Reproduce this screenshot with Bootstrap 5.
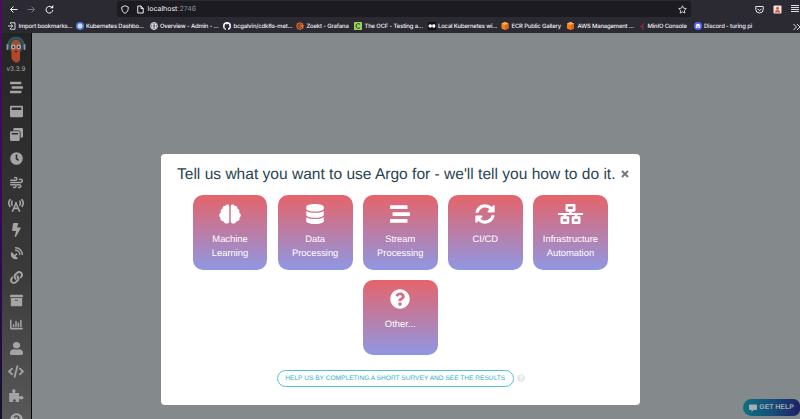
<!DOCTYPE html>
<html lang="en">
<head>
<meta charset="utf-8">
<meta name="viewport" content="width=device-width, initial-scale=1">
<title>Argo</title>
<link rel="stylesheet" href="https://cdn.jsdelivr.net/npm/bootstrap@5.3.0/dist/css/bootstrap.min.css">
<style>
html, body { height: 419px; overflow: hidden; }
body { font-family: "Liberation Sans", Arial, sans-serif; background: linear-gradient(#4c0d62, #37085a 50%, #14102c); padding-left: 1.5px; text-rendering: geometricPrecision; }
svg { display: block; flex: none; }
.chrome { background: #2b2a33; font-family: Inter, "Noto Sans", sans-serif; color: #f4f4f8; }
.toolbar { height: 18px; padding-left: 7px; }
.tools { width: 108px; gap: 9px; }
.address { width: 574px; height: 16px; background: #1c1b22; border-radius: 2px; font-size: 7px; padding: 0 4px; gap: 4px; }
.address span { padding-top: 1px; }
.address .port { color: #8e8d96; }
.toolbar-end { gap: 9px; margin-left: 64px; }
.bookmarks { display: grid; grid-template-columns: 67.5px 74px 73.5px 73px 58px 73.5px 73.5px 65px 74px 53.5px 99px auto; height: 15px; padding: 2px 0 0 6.5px; font-size: 5.9px; letter-spacing: -.15px; font-weight: 500; white-space: nowrap; align-items: center; }
.bookmarks .bm { display: flex; align-items: center; gap: 2.5px; }
.bookmarks .bm span { padding-top: 1px; }
.rail { width: 30px; background: linear-gradient(#242424, #303030 35%, #3a3a3a 62%, #585858); border-right: 1.5px solid #080808; color: #a4a4a4; padding-top: 4px; }
.rail .ver { font-size: 6.9px; line-height: 8px; color: #a9a9a9; margin-top: 2.500px; }
.rail .slot { height: 23.73px; flex: none; display: flex; align-items: center; justify-content: center; }
.rail .slots { margin-top: 2px; }
.stage { background: #84898b; padding: 121px 0 0 129.5px; }
.dialog { width: 478.5px; height: 251px; border-radius: 4px; background: #fff; padding-top: 10px; }
.dialog h1 { font-size: 15.55px; line-height: 21px; color: #2a4452; margin: 0; white-space: nowrap; font-weight: 400; }
.heading { padding: 0 10.500px 0 16px; height: 20px; }
.tiles { gap: 10.3px; margin-top: 11px; }
.tile { width: 74.8px; height: 74.8px; border-radius: 10px; background: linear-gradient(#e5646a, #8f97e3); color: #fff; font-size: 9.4px; line-height: 14px; padding-top: 9px; }
.tile svg { margin-bottom: 8px; }
.survey { height: 17px; width: 237px; border: 1px solid #52c0d0; border-radius: 9px; color: #2fb1c4; font-size: 6.6px; line-height: 15px; white-space: nowrap; }
.survey-row { margin-top: 15px; gap: 3px; padding-left: 1px; color: #e3e5e7; }
.help { right: 0; top: 399px; width: 57px; height: 17px; border-radius: 9px 7px 7px 9px; background: linear-gradient(90deg, #0b7181, #164f7a 50%, #1b2166); color: #a9abb0; font-size: 6.9px; font-weight: 700; gap: 2px; white-space: nowrap; }
.help span { padding-top: 1.500px; }
</style>
<script src="https://cdn.jsdelivr.net/npm/bootstrap@5.3.0/dist/js/bootstrap.bundle.min.js"></script>
</head>
<body class="d-flex flex-column m-0">
<header class="chrome flex-shrink-0">
  <div class="toolbar d-flex align-items-center">
    <div class="tools d-flex align-items-center">
      <svg width="9" height="9" viewBox="0 0 18 18" fill="none" stroke="#f4f4f8" stroke-width="2"><path d="M17 9H3M9 3 3 9l6 6"/></svg>
      <svg width="9" height="9" viewBox="0 0 18 18" fill="none" stroke="#77767f" stroke-width="2"><path d="M1 9h14M9 3l6 6-6 6"/></svg>
      <svg width="9" height="9" viewBox="0 0 18 18" fill="none" stroke="#f4f4f8" stroke-width="2"><path d="M15.500 10A6.700 6.700 0 1 1 13 4.200"/><path d="M10 6.500h6.500V0z" fill="#f4f4f8" stroke="none"/></svg>
    </div>
    <div class="address d-flex align-items-center">
      <svg width="8" height="9" viewBox="0 0 16 18" fill="none" stroke="#f4f4f8" stroke-width="1.800"><path d="M8 1.500 14.500 4c.3 6-1.500 10.500-6.500 12.800C3 14.500 1.200 10 1.500 4z"/></svg>
      <svg class="ms-1" width="7" height="9" viewBox="0 0 14 18" fill="none" stroke="#f4f4f8" stroke-width="1.900"><path d="M1.500 2v14h11V7L8 2zM8 2v5h4.500"/></svg>
      <span>localhost<span class="port">:2746</span></span>
      <svg class="ms-auto" width="9" height="9" viewBox="0 0 18 18" fill="none" stroke="#e8e8ee" stroke-width="1.700" stroke-linejoin="round"><path d="m9 1.500 2.300 4.900 5.300.7-3.900 3.700 1 5.400L9 13.600l-4.700 2.600 1-5.400L1.400 7.100l5.300-.7z"/></svg>
    </div>
    <div class="toolbar-end d-flex align-items-center">
      <svg width="9" height="9" viewBox="0 0 18 18" fill="none" stroke="#eeeef3" stroke-width="1.900" stroke-linejoin="round"><path d="M1.500 3h15v5.500a7.500 7.500 0 0 1-15 0zM5 7.500l4 4 4-4"/></svg>
      <svg width="9" height="9" viewBox="0 0 18 18"><rect x="1" y="1" width="16" height="16" rx="2" fill="#f3e3e0"/><circle cx="9" cy="6.500" r="3" fill="#d9573f"/><path d="M3.500 15c0-7 11-7 11 0z" fill="#d9573f"/></svg>
      <svg width="8" height="8" viewBox="0 0 8 8" fill="#dedee4" shape-rendering="crispEdges"><path d="M0 0h8v1H0zM0 2h8v1H0zM0 4h8v1H0zM0 6h8v1H0z"/></svg>
    </div>
  </div>
  <nav class="bookmarks">
    <div class="bm"><svg width="8" height="8" viewBox="0 0 16 16" fill="none" stroke="#f4f4f8" stroke-width="1.700"><path d="M5 4V1.500h9v13H5V12M0 8h9M6 5l3.500 3L6 11"/></svg><span>Import bookmarks...</span></div>
    <div class="bm"><svg width="8" height="8" viewBox="0 0 16 16"><circle cx="8" cy="8" r="8" fill="#4a80e8"/><circle cx="8" cy="8" r="3.500" fill="none" stroke="#fff" stroke-width="1.500"/><path d="M8 2v12M2 8h12M4 4l8 8M12 4l-8 8" stroke="#fff"/></svg><span>Kubernetes Dashbo...</span></div>
    <div class="bm"><svg width="8" height="8" viewBox="0 0 16 16" fill="none" stroke="#f4f4f8" stroke-width="1.500"><circle cx="8" cy="8" r="7"/><ellipse cx="8" cy="8" rx="3.300" ry="7"/><path d="M1 8h14M2 4.500h12M2 11.500h12"/></svg><span>Overview - Admin - ...</span></div>
    <div class="bm"><svg width="8" height="8" viewBox="0 0 16 16"><circle cx="8" cy="8" r="8" fill="#f4f4f8"/><path d="M6 16v-3.500C2 12 3 7 4 6V3.500l2 1h4l2-1V6c1.500 2 1.500 6-2 6.500V16zM6 14c-2 .5-3-1-3.500-2" fill="#2b2a33"/></svg><span>bcgalvin/cdk8s-met...</span></div>
    <div class="bm"><svg width="8" height="8" viewBox="0 0 16 16"><path d="m8 0 2 2 3-.5.500 3L16 7l-1.500 3 .5 3-3 .5L9 16l-3-1.500-3 .5-.5-3L0 9l1.500-3L1 3l3-.5z" fill="#ee6c27"/><path d="M12 10a4.500 4.500 0 1 1-.5-4.500M9.500 9a2 2 0 1 1-.5-2.500" fill="none" stroke="#2b2a33" stroke-width="1.500"/></svg><span>Zoekt - Grafana</span></div>
    <div class="bm"><svg width="8" height="8" viewBox="0 0 16 16"><rect width="16" height="16" rx="1" fill="#9bd05a"/><path d="M12 4.500C9 2 4 3.500 4 8s5 6 8 3.500" fill="none" stroke="#29371c" stroke-width="1.900"/></svg><span>The OCF - Testing a...</span></div>
    <div class="bm"><svg width="8" height="8" viewBox="0 0 16 16"><rect width="16" height="16" fill="#111"/><circle cx="4.500" cy="8" r="3.500" fill="#fff"/><rect x="8.500" y="4.500" width="6" height="7" rx="2.500" fill="#fff"/></svg><span>Local Kubernetes wi...</span></div>
    <div class="bm"><svg width="8" height="8" viewBox="0 0 16 16"><path d="m8 0 7 3v10l-7 3-7-3V3z" fill="#f58220"/><path d="m8 6 7-3v10l-7 3z" fill="#dc6516"/><path d="m1 3 7-3 7 3-7 3z" fill="#ffae53"/></svg><span>ECR Public Gallery</span></div>
    <div class="bm"><svg width="9" height="8" viewBox="0 0 16 16"><path d="m8 0 7 3v10l-7 3-7-3V3z" fill="#f58220"/><path d="m8 6 7-3v10l-7 3z" fill="#dc6516"/><path d="m1 3 7-3 7 3-7 3z" fill="#ffae53"/></svg><span>AWS Management ...</span></div>
    <div class="bm"><svg width="5" height="8" viewBox="0 0 10 16" fill="none" stroke="#b52b3f" stroke-width="1.700"><path d="M6 16V8l-5 2c1-3 4-4 6-5 2-1 1-3-1-4"/></svg><span>MinIO Console</span></div>
    <div class="bm"><svg width="8" height="8" viewBox="0 0 16 16"><circle cx="8" cy="8" r="8" fill="#5468f0"/><path d="M3.500 11c0-3 .5-5 1.500-6.500 2-.7 4-.7 6 0 1 1.500 1.500 3.500 1.500 6.500-1 .8-2 1-2.500 1l-.5-1h-3L6 12c-.5 0-1.500-.2-2.500-1z" fill="#fff"/><circle cx="6.200" cy="8.300" r="1.100" fill="#5468f0"/><circle cx="9.800" cy="8.300" r="1.100" fill="#5468f0"/></svg><span>Discord - turing pi</span></div>
    <svg width="8" height="8" viewBox="0 0 16 16" fill="none" stroke="#f4f4f8" stroke-width="1.800"><path d="m1 2 6 6-6 6M8 2l6 6-6 6"/></svg>
  </nav>
</header>
<main class="d-flex flex-grow-1 overflow-hidden position-relative">
  <aside class="rail flex-shrink-0 d-flex flex-column">
    <div class="d-flex flex-column align-items-center flex-shrink-0">
      <svg width="20" height="26" viewBox="0 0 40 52"><path d="M4 17a16 16 0 0 1 32 0" fill="#234e55" stroke="#2b6268" stroke-width="3"/><circle cx="20" cy="18" r="15" fill="#234e55"/><path d="M20 6c7 0 10 5 10 12 0 6-2 9-2 15v14c-1 2-3 2-3-1v4c-2 2-4 1-4-1v2c-1 1-3 1-3-1v-3c-1 3-3 3-4 1v-3c-2 1-3 0-3-2V33c0-6-1-9-1-15C10 11 13 6 20 6z" fill="#b0492c"/><rect x="1" y="14" width="4" height="12" rx="2" fill="#8f9697"/><rect x="35" y="14" width="4" height="12" rx="2" fill="#8f9697"/><circle cx="14.500" cy="20" r="4.800" fill="#a9aaaa"/><circle cx="25.500" cy="20" r="4.800" fill="#a9aaaa"/><circle cx="14.800" cy="20" r="2" fill="#222"/><circle cx="25.200" cy="20" r="2" fill="#222"/><path d="M17 28q3 5 6 0z" fill="#2a1a16"/></svg>
      <div class="ver">v3.3.9</div>
    </div>
    <div class="slots">
      <div class="slot"><svg width="13" height="13" viewBox="0 0 512 512" fill="currentColor"><path d="M16 128h416c8.840 0 16-7.160 16-16V48c0-8.840-7.160-16-16-16H16C7.160 32 0 39.160 0 48v64c0 8.840 7.160 16 16 16zm480 80H80c-8.840 0-16 7.160-16 16v64c0 8.840 7.160 16 16 16h416c8.840 0 16-7.160 16-16v-64c0-8.840-7.160-16-16-16zm-64 176H16c-8.840 0-16 7.160-16 16v64c0 8.840 7.160 16 16 16h416c8.840 0 16-7.160 16-16v-64c0-8.840-7.160-16-16-16z"/></svg></div>
      <div class="slot"><svg width="13" height="13" viewBox="0 0 512 512" fill="currentColor"><path d="M464 32H48C21.500 32 0 53.500 0 80v352c0 26.500 21.500 48 48 48h416c26.500 0 48-21.500 48-48V80c0-26.500-21.500-48-48-48zm-16 160H64v-84c0-6.600 5.400-12 12-12h360c6.600 0 12 5.400 12 12v84z"/></svg></div>
      <div class="slot"><svg width="13" height="13" viewBox="0 0 512 512" fill="currentColor"><path d="M512 48v288c0 26.500-21.500 48-48 48h-48V176c0-44.100-35.900-80-80-80H128V48c0-26.500 21.500-48 48-48h288c26.500 0 48 21.500 48 48zM384 176v288c0 26.500-21.500 48-48 48H48c-26.500 0-48-21.500-48-48V176c0-26.500 21.500-48 48-48h288c26.500 0 48 21.500 48 48zm-68 28c0-6.600-5.400-12-12-12H76c-6.600 0-12 5.400-12 12v52h252v-52z"/></svg></div>
      <div class="slot"><svg width="13" height="13" viewBox="0 0 512 512" fill="currentColor"><path fill-rule="evenodd" d="M256 8a248 248 0 1 0 0 496 248 248 0 0 0 0-496zM224 96h64v160l70 52-39 50-95-72z"/></svg></div>
      <div class="slot"><svg width="13" height="13" viewBox="0 0 512 512" fill="none" stroke="currentColor" stroke-width="56" stroke-linecap="round"><path d="M30 166h190a55 55 0 1 0-38-95M30 256h392a65 65 0 1 0-44-114M30 346h150a55 55 0 1 1-38 95M270 346h100a55 55 0 1 1-38 95"/></svg></div>
      <div class="slot"><svg width="16" height="13" viewBox="0 0 640 512" fill="none" stroke="currentColor" stroke-width="64" stroke-linecap="round"><path d="M80 25c-65 90-65 180 0 270M165 80c-28 55-28 105 0 160M560 25c65 90 65 180 0 270M475 80c28 55 28 105 0 160M320 165 180 485M320 165l140 320M238 370h164"/><circle cx="320" cy="155" r="42" fill="currentColor" stroke="none"/></svg></div>
      <div class="slot"><svg width="9" height="14" viewBox="0 0 320 512" fill="currentColor"><path d="M296 160H180.600l42.600-129.800C227.200 15 215.700 0 200 0H56C44 0 33.800 8.900 32.200 20.800l-32 240C-1.700 275.200 9.500 288 24 288h118.700L96.600 482.500c-3.600 15.200 8 29.500 23.300 29.500 8.400 0 16.400-4.400 20.800-12l176-304c9.300-15.900-2.200-36-20.700-36z"/></svg></div>
      <div class="slot"><svg width="13" height="13" viewBox="0 0 512 512" fill="currentColor"><path d="M50 208c8-9 18-8 25-1l112 112 29-29a38 38 0 1 1 34 34l-29 29 87 87c9 9 9 18-3 25C130 545-20 365 50 208z"/><path d="M220 30c145 0 262 117 262 262M220 128c90 0 164 74 164 164" fill="none" stroke="currentColor" stroke-width="56" stroke-linecap="round"/></svg></div>
      <div class="slot"><svg width="13" height="13" viewBox="0 0 512 512" fill="currentColor"><path d="M326.612 185.391c59.747 59.809 58.927 155.698.36 214.590-.11.120-.24.250-.36.370l-67.200 67.200c-59.270 59.270-155.699 59.262-214.960 0-59.270-59.260-59.270-155.700 0-214.960l37.106-37.106c9.840-9.840 26.786-3.300 27.294 10.606.648 17.722 3.826 35.527 9.690 52.721 1.986 5.822.567 12.262-3.783 16.612l-13.087 13.087c-28.026 28.026-28.905 73.660-1.155 101.960 28.024 28.579 74.086 28.749 102.325.510l67.200-67.190c28.191-28.191 28.073-73.757 0-101.830-3.701-3.694-7.429-6.564-10.341-8.569a16.037 16.037 0 0 1-6.947-12.606c-.396-10.567 3.348-21.456 11.698-29.806l21.054-21.055c5.521-5.521 14.182-6.199 20.584-1.731a152.482 152.482 0 0 1 20.522 17.197zM467.547 44.449c-59.261-59.262-155.690-59.270-214.960 0l-67.200 67.200c-.12.120-.25.250-.36.370-58.566 58.892-59.387 154.781.36 214.590a152.454 152.454 0 0 0 20.521 17.196c6.402 4.468 15.064 3.789 20.584-1.731l21.054-21.055c8.350-8.350 12.094-19.239 11.698-29.806a16.037 16.037 0 0 0-6.947-12.606c-2.912-2.005-6.640-4.875-10.341-8.569-28.073-28.073-28.191-73.639 0-101.830l67.200-67.190c28.239-28.239 74.300-28.069 102.325.510 27.750 28.300 26.872 73.934-1.155 101.960l-13.087 13.087c-4.350 4.350-5.769 10.790-3.783 16.612 5.864 17.194 9.042 34.999 9.690 52.721.509 13.906 17.454 20.446 27.294 10.606l37.106-37.106c59.271-59.259 59.271-155.699.001-214.959z"/></svg></div>
      <div class="slot"><svg width="13" height="13" viewBox="0 0 512 512" fill="currentColor"><path d="M32 448c0 17.700 14.300 32 32 32h384c17.700 0 32-14.300 32-32V160H32v288zm160-212c0-6.600 5.400-12 12-12h104c6.600 0 12 5.400 12 12v8c0 6.600-5.400 12-12 12H204c-6.600 0-12-5.400-12-12v-8zM480 32H32C14.300 32 0 46.300 0 64v48c0 8.800 7.200 16 16 16h480c8.800 0 16-7.200 16-16V64c0-17.700-14.300-32-32-32z"/></svg></div>
      <div class="slot"><svg width="13" height="13" viewBox="0 0 512 512" fill="none" stroke="currentColor" stroke-width="60" stroke-linecap="round"><path d="M32 90v328h448" stroke-linejoin="round"/><path d="M140 270v65M236 140v195M332 205v130M428 100v235"/></svg></div>
      <div class="slot"><svg width="13" height="13" viewBox="0 0 448 512" preserveAspectRatio="none" fill="currentColor"><path d="M224 256c70.700 0 128-57.300 128-128S294.700 0 224 0 96 57.300 96 128s57.300 128 128 128zm89.600 32h-16.700c-22.200 10.200-46.900 16-72.900 16s-50.600-5.800-72.900-16h-16.700C60.200 288 0 348.200 0 422.400V464c0 26.500 21.500 48 48 48h352c26.500 0 48-21.500 48-48v-41.600c0-74.200-60.200-134.400-134.400-134.400z"/></svg></div>
      <div class="slot"><svg width="16" height="13" viewBox="0 0 640 512" fill="none" stroke="currentColor" stroke-width="72" stroke-linecap="round"><path d="M165 140 40 256l125 116M475 140l125 116-125 116M375 40 265 472"/></svg></div>
      <div class="slot"><svg width="15" height="13" viewBox="0 0 576 512" fill="currentColor"><path d="M0 160h125c20 0 24-14 10-32-38-46-10-118 50-118s88 72 50 118c-14 18-10 32 10 32h145v125c0 20 14 24 32 10 46-38 144-10 144 50s-98 88-144 50c-18-14-32-10-32 10v107H265c-20 0-24-14-12-30 30-35 8-78-48-78s-78 43-48 78c12 16 8 30-12 30H0z"/></svg></div>
      <div class="slot"><svg width="13" height="13" viewBox="0 0 512 512" fill="currentColor"><use href="#question"/></svg></div>
    </div>
  </aside>
  <section class="stage flex-grow-1">
    <div class="dialog">
      <div class="heading d-flex align-items-center justify-content-between">
        <h1>Tell us what you want to use Argo for - we'll tell you how to do it.</h1>
        <svg width="8" height="8" viewBox="0 0 16 16" stroke="#727679" stroke-width="3.800"><path d="m2 2 12 12M14 2 2 14"/></svg>
      </div>
      <div class="tiles d-flex flex-wrap justify-content-center">
        <div class="tile d-flex flex-column align-items-center text-center"><svg width="22" height="20" viewBox="0 0 44 40" fill="#fff"><path d="M20.500 4.500C20.500 0 14.500-.5 13 3.500 9 3 6.500 6 7.200 9.500 3.500 10.500 2.500 14 4 17-.5 19.500-.5 25 3 27.500 2 32 5.500 35 9 34.500c1.500 6 11.500 6.500 11.500 0zM23.500 4.500C23.500 0 29.500-.5 31 3.500c4-.5 6.500 2.500 5.800 6 3.700 1 4.700 4.500 3.200 7.500 4.500 2.500 4.500 8 1 10.500 1 4.500-2.500 7.500-6 7-1.500 6-11.500 6.500-11.500 0z"/></svg><span>Machine<br>Learning</span></div>
        <div class="tile d-flex flex-column align-items-center text-center"><svg width="18" height="20" viewBox="0 0 448 512" fill="#fff"><path d="M448 73.143v45.714C448 159.143 347.667 192 224 192S0 159.143 0 118.857V73.143C0 32.857 100.333 0 224 0s224 32.857 224 73.143zM448 176v102.857C448 319.143 347.667 352 224 352S0 319.143 0 278.857V176c48.125 33.143 136.208 48.572 224 48.572S399.874 209.143 448 176zm0 160v102.857C448 479.143 347.667 512 224 512S0 479.143 0 438.857V336c48.125 33.143 136.208 48.572 224 48.572S399.874 369.143 448 336z"/></svg><span>Data<br>Processing</span></div>
        <div class="tile d-flex flex-column align-items-center text-center"><svg width="20" height="20" viewBox="0 0 512 512" fill="#fff"><path d="M16 128h416c8.840 0 16-7.160 16-16V48c0-8.840-7.160-16-16-16H16C7.160 32 0 39.160 0 48v64c0 8.840 7.160 16 16 16zm480 80H80c-8.840 0-16 7.160-16 16v64c0 8.840 7.160 16 16 16h416c8.840 0 16-7.160 16-16v-64c0-8.840-7.160-16-16-16zm-64 176H16c-8.840 0-16 7.160-16 16v64c0 8.840 7.160 16 16 16h416c8.840 0 16-7.160 16-16v-64c0-8.840-7.160-16-16-16z"/></svg><span>Stream<br>Processing</span></div>
        <div class="tile d-flex flex-column align-items-center text-center"><svg width="20" height="20" viewBox="0 0 512 512" fill="#fff"><path d="M370.720 133.280C339.458 104.008 298.888 87.962 255.848 88c-77.458.068-144.328 53.178-162.791 126.850-1.344 5.363-6.122 9.150-11.651 9.150H24.103c-7.498 0-13.194-6.807-11.807-14.176C33.933 94.924 134.813 8 256 8c66.448 0 126.791 26.136 171.315 68.685L463.030 40.970C478.149 25.851 504 36.559 504 57.941V192c0 13.255-10.745 24-24 24H345.941c-21.382 0-32.090-25.851-16.971-40.971zM32 296h134.059c21.382 0 32.090 25.851 16.971 40.971l-41.750 41.750c31.262 29.273 71.835 45.319 114.876 45.280 77.418-.070 144.315-53.144 162.787-126.849 1.344-5.363 6.122-9.150 11.651-9.150h57.304c7.498 0 13.194 6.807 11.807 14.176C478.067 417.076 377.187 504 256 504c-66.448 0-126.791-26.136-171.315-68.685L48.970 471.030C33.851 486.149 8 475.441 8 454.059V320c0-13.255 10.745-24 24-24z"/></svg><span>CI/CD</span></div>
        <div class="tile d-flex flex-column align-items-center text-center"><svg width="25" height="20" viewBox="0 0 640 512" fill="none" stroke="#fff" stroke-width="66" stroke-linejoin="round"><rect x="225" y="33" width="190" height="130"/><rect x="97" y="349" width="158" height="130"/><rect x="385" y="349" width="158" height="130"/><path d="M0 256h640" stroke-width="52"/><path d="M320 170v86M176 256v80M464 256v80"/></svg><span>Infrastructure<br>Automation</span></div>
        <div class="tile d-flex flex-column align-items-center text-center"><svg width="20" height="20" viewBox="0 0 512 512" fill="#fff"><path id="question" d="M504 256c0 136.997-111.043 248-248 248S8 392.997 8 256C8 119.083 119.043 8 256 8s248 111.083 248 248zM262.655 90c-54.497 0-89.255 22.957-116.549 63.758-3.536 5.286-2.353 12.415 2.715 16.258l34.699 26.310c5.205 3.947 12.621 3.008 16.665-2.122 17.864-22.658 30.113-35.797 57.303-35.797 20.429 0 45.698 13.148 45.698 32.958 0 14.976-12.363 22.667-32.534 33.976C247.128 238.528 216 254.941 216 296v4c0 6.627 5.373 12 12 12h56c6.627 0 12-5.373 12-12v-1.333c0-28.462 83.186-29.647 83.186-106.667 0-58.002-60.165-102-116.531-102zM256 338c-25.365 0-46 20.635-46 46 0 25.364 20.635 46 46 46s46-20.636 46-46c0-25.365-20.635-46-46-46z"/></svg><span>Other...</span></div>
      </div>
      <div class="survey-row d-flex align-items-center justify-content-center">
        <div class="survey text-center">HELP US BY COMPLETING A SHORT SURVEY AND SEE THE RESULTS</div>
        <svg width="8" height="8" viewBox="0 0 512 512" fill="currentColor"><use href="#question"/></svg>
      </div>
    </div>
  </section>
</main>
<div class="help position-absolute d-flex align-items-center justify-content-center"><svg width="8" height="8" viewBox="0 0 16 16" fill="currentColor"><path d="M2 1h12a2 2 0 0 1 2 2v7a2 2 0 0 1-2 2H9l-4 4v-4H2a2 2 0 0 1-2-2V3a2 2 0 0 1 2-2z"/></svg><span>GET HELP</span></div>
</body>
</html>
